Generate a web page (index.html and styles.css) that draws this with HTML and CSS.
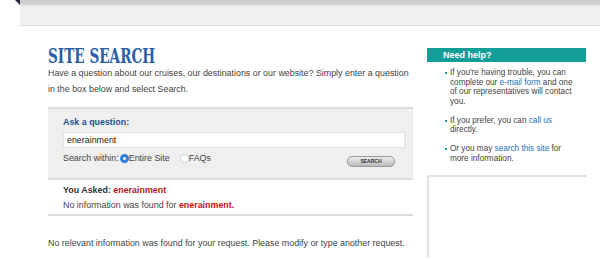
FILE: index.html
```html
<!DOCTYPE html>
<html lang="en">
<head>
    <meta charset="UTF-8">
    <meta name="viewport" content="width=device-width, initial-scale=1.0">
    <title>Site Search</title>
    <link rel="stylesheet" href="styles.css">
</head>
<body>
    <div class="topbar">
        <span class="corner"></span>
        <div class="topbar-inner"></div>
    </div>
    <div class="page">
        <div class="main">
            <h1>SITE SEARCH</h1>
            <p class="intro">Have a question about our cruises, our destinations or our website? Simply enter a question in the box below and select Search.</p>
            <div class="search-box">
                <label class="ask" for="question">Ask a question:</label>
                <div class="field" id="question">enerainment</div>
                <div class="options">
                    <span class="within">Search within:</span>
                    <span class="radio checked"></span><span class="opt">Entire Site</span>
                    <span class="radio"></span><span class="opt">FAQs</span>
                    <span class="search-btn">SEARCH</span>
                </div>
            </div>
            <div class="asked">
                <div class="you-asked">You Asked: <span class="hl">enerainment</span></div>
                <div>No information was found for <span class="hl">enerainment.</span></div>
            </div>
            <p class="none">No relevant information was found for your request. Please modify or type another request.</p>
        </div>
        <div class="side">
            <div class="help-head">Need help?</div>
            <ul class="help-list">
                <li>If you're having trouble, you can complete our <a href="#">e-mail form</a> and one of our representatives will contact you.</li>
                <li>If you prefer, you can <a href="#">call us</a> directly.</li>
                <li>Or you may <a href="#">search this site</a> for more information.</li>
            </ul>
            <div class="side-box"></div>
        </div>
    </div>
</body>
</html>
```

FILE: styles.css
```css
body {
    margin: 0;
    font-family: 'Liberation Sans', Arial, sans-serif;
    font-size: 8.9px;
    color: #444;
    background-color: white;
    overflow: hidden;
}
.topbar {
    display: flex;
    height: 27px;
}
.corner {
    width: 0;
    height: 0;
    margin-left: 15px;
    border-top: 5px solid #1c2448;
    border-left: 5px solid transparent;
}
.topbar-inner {
    flex: 1;
    background: linear-gradient(#c9c9c9 0, #d6d6d6 5px, #efefef 6px, #efefef 25px);
    border-bottom: 1px solid #d9d9d9;
    height: 25px;
}
.page {
    display: flex;
    padding: 17px 0 0 48px;
}
.main {
    width: 365px;
}
h1 {
    display: inline-block;
    margin: 2px 0 0;
    font-family: 'DejaVu Serif', serif;
    font-weight: bold;
    font-size: 20px;
    line-height: 20px;
    color: #2b5ea8;
    transform: scaleX(0.68);
    transform-origin: left center;
    white-space: nowrap;
}
.intro {
    margin: -1px 0 0;
    line-height: 16px;
    padding-bottom: 10px;
    border-bottom: 2px solid #dcdcdc;
}
.search-box {
    background-color: #efefef;
    padding: 6px 8px 13px 15px;
    border-bottom: 2px solid #dcdcdc;
}
.ask {
    display: block;
    font-weight: bold;
    color: #1f4f93;
    line-height: 14px;
    margin-bottom: 3px;
}
.field {
    background-color: white;
    border: 1px solid #e2e2e2;
    height: 14px;
    line-height: 14px;
    padding: 0 3px;
    color: #222;
}
.options {
    display: flex;
    align-items: center;
    margin-top: 3px;
    height: 14px;
}
.within {
    margin-right: 1px;
}
.radio {
    width: 9px;
    height: 9px;
    border-radius: 50%;
    border: 1px solid #cfcfcf;
    background-color: white;
    box-sizing: border-box;
}
.radio.checked {
    border: 3px solid #2a7fe0;
}
.opt {
    margin-right: 10px;
}
.search-btn {
    margin: 6px 10px 0 auto;
    width: 46px;
    height: 9px;
    border-radius: 5px;
    border: 1px solid #9a9a9a;
    background: linear-gradient(#ececec, #b9b9b9);
    font-size: 5px;
    font-weight: bold;
    color: #333;
    text-align: center;
    line-height: 9px;
}
.asked {
    padding: 3px 0 1px 15px;
    line-height: 15px;
    border-bottom: 2px solid #dcdcdc;
}
.you-asked {
    font-weight: bold;
    color: #333;
}
.hl {
    color: #c4101a;
    font-weight: bold;
}
.none {
    margin: 22px 0 0;
}
.side {
    margin: 4px 0 0 14px;
    width: 159px;
}
.help-head {
    background-color: #149e9a;
    color: white;
    font-weight: bold;
    font-size: 9px;
    line-height: 14px;
    padding-left: 16px;
}
.help-list {
    list-style: none;
    margin: 6px 0 0;
    padding: 0 13px 0 23px;
    font-size: 8.2px;
    line-height: 9.5px;
}
.help-list li {
    position: relative;
    margin-bottom: 9.5px;
}
.help-list li::before {
    content: "";
    position: absolute;
    left: -5px;
    top: 4px;
    width: 2px;
    height: 2px;
    background-color: #149e9a;
}
.help-list a {
    color: #1a6fc0;
    text-decoration: none;
}
.side-box {
    margin-top: 12px;
    height: 80px;
    border-top: 2px solid #e2e2e2;
    border-left: 2px solid #e2e2e2;
}
```
